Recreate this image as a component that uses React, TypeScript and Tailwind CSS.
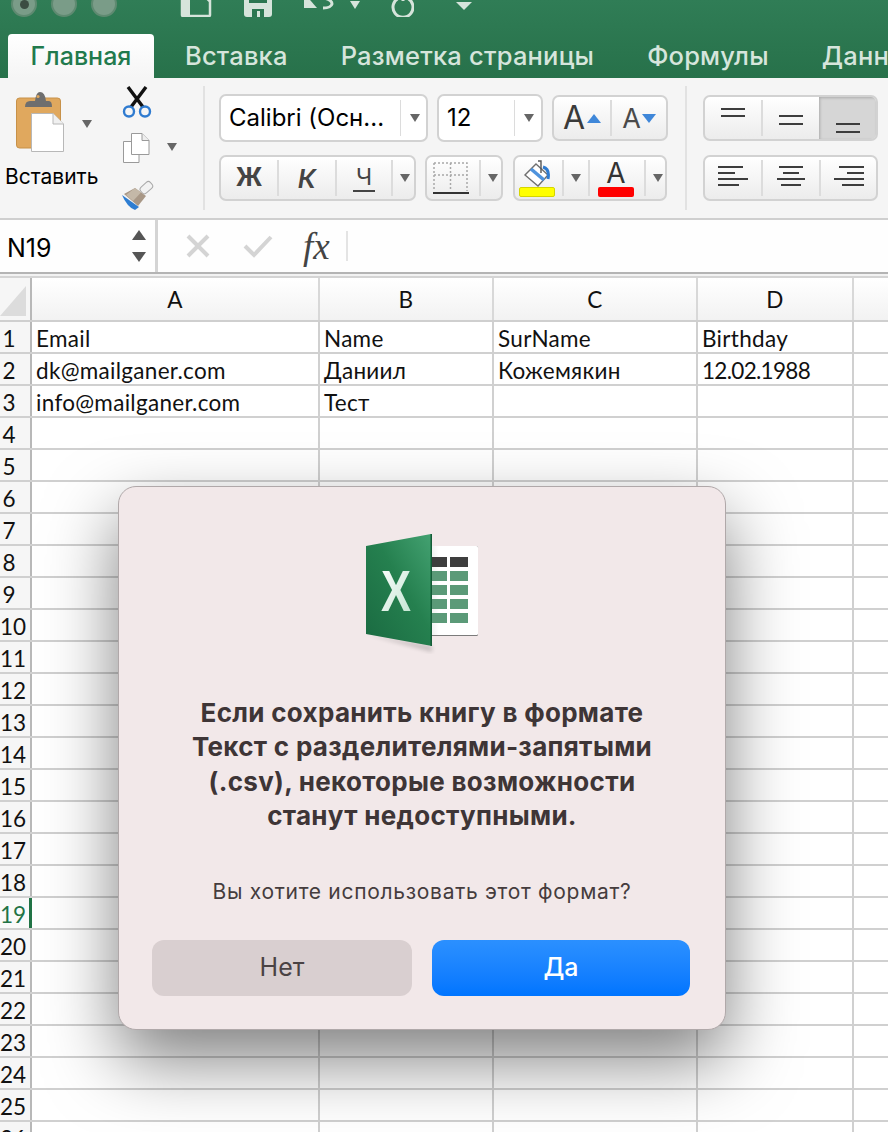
import React from 'react';

const columns = [
  { name: 'A', width: 'w-[288px]' },
  { name: 'B', width: 'w-[174px]' },
  { name: 'C', width: 'w-[204px]' },
  { name: 'D', width: 'w-[156px]' },
  { name: '', width: 'w-[40px]' },
];

const cellData: Record<number, string[]> = {
  1: ['Email', 'Name', 'SurName', 'Birthday', ''],
  2: ['dk@mailganer.com', 'Даниил', 'Кожемякин', '12.02.1988', ''],
  3: ['info@mailganer.com', 'Тест', '', '', ''],
};

const rows = Array.from({ length: 26 }, (_, i) => i + 1);
const emptyRow = ['', '', '', '', ''];

const Caret: React.FC<{ up?: boolean; color?: string; className?: string }> = ({ up, color = '#666666', className }) => (
  <svg width="10" height="8" viewBox="0 0 10 8" preserveAspectRatio="none" className={className}>
    <path d={up ? 'M0 8 L5 0 L10 8 Z' : 'M0 0 L10 0 L5 8 Z'} fill={color} />
  </svg>
);

const Lines: React.FC<{ rows: [number, number, number][] }> = ({ rows }) => (
  <svg width="32" height="30" viewBox="0 0 32 30">
    {rows.map(([y, x1, x2], i) => (
      <rect key={i} x={x1} y={y} width={x2 - x1} height="2" fill="#3d3d3d" />
    ))}
  </svg>
);

const Divider = () => <div className="h-[36px] w-[2px] bg-[#dcdcdc]" />;

const groupClass =
  'flex h-[46px] items-center overflow-hidden rounded-[7px] border-2 border-[#d2d2d2] bg-linear-to-b from-white to-[#ececec]';

const ClipboardIcon = () => (
  <svg width="48" height="60" viewBox="0 0 48 60">
    <rect x="0.5" y="6" width="44" height="50" rx="3" fill="#e0a85e" stroke="#c79149" />
    <path d="M9 15 Q9 9 14 9 L19 9 Q20 0 24 0 Q29 0 30 9 L33 9 Q36 9 36 15 Z" fill="#6e6e6e" />
    <circle cx="22" cy="4.5" r="1.6" fill="#e0a85e" />
    <path d="M15.5 21.5 L37 21.5 L47.5 32 L47.5 59.5 L15.5 59.5 Z" fill="#ffffff" stroke="#b8b8b8" />
    <path d="M37 21.5 L37 32 L47.5 32" fill="#f0f0f0" stroke="#b8b8b8" />
  </svg>
);

const ScissorsIcon = () => (
  <svg width="30" height="33" viewBox="0 0 30 33">
    <path d="M6 1 L21 21 M24 1 L9 21" stroke="#111111" strokeWidth="3.4" />
    <circle cx="7" cy="25.5" r="5" fill="none" stroke="#2f7bd0" strokeWidth="2.4" />
    <circle cx="23" cy="25.5" r="5" fill="none" stroke="#2f7bd0" strokeWidth="2.4" />
  </svg>
);

const CopyIcon = () => (
  <svg width="27" height="31" viewBox="0 0 27 31">
    <path d="M0.5 8.5 L16 8.5 L16 29.5 L0.5 29.5 Z" fill="#ffffff" stroke="#9a9a9a" />
    <path d="M8.5 0.5 L19 0.5 L26 7.5 L26 21.5 L8.5 21.5 Z" fill="#ffffff" stroke="#9a9a9a" />
    <path d="M19 0.5 L19 7.5 L26 7.5" fill="#eeeeee" stroke="#9a9a9a" />
  </svg>
);

const BrushIcon = () => (
  <svg width="34" height="30" viewBox="0 0 34 30">
    <rect x="21" y="1" width="8" height="13" rx="3" transform="rotate(48 25 8)" fill="#f2f2f2" stroke="#a9a9a9" />
    <path d="M14 8 L25 16 L17 26 L3 14 Z" fill="#a89786" />
    <path d="M14 8 L20 12.5 L12 21 L5 15 Z" fill="#c4b8a8" />
    <path d="M1 15 L18 27 L14 30 Q6 27 1 15 Z" fill="#2d7dd2" />
  </svg>
);

const BucketIcon = () => (
  <svg width="28" height="28" viewBox="0 0 28 28">
    <path d="M13 4 L25 15 L15 26 L2 15 Z" fill="#ffffff" stroke="#6f6f6f" strokeWidth="1.4" />
    <path d="M8 9 L21 20" stroke="#4f93dd" strokeWidth="3.5" />
    <path d="M15 1 L18 1 L18 13" fill="none" stroke="#555555" strokeWidth="1.4" />
    <path d="M20 7 Q27 9 25 19" fill="none" stroke="#2f7bd0" strokeWidth="3" />
  </svg>
);

const ExcelLogo = () => (
  <svg width="116" height="120" viewBox="0 0 116 120">
    <defs>
      <linearGradient id="xlGreen" x1="0" y1="1" x2="1" y2="0">
        <stop offset="0" stopColor="#1a6a41" />
        <stop offset="0.55" stopColor="#25804f" />
        <stop offset="1" stopColor="#44a272" />
      </linearGradient>
      <linearGradient id="xlLetter" x1="0" y1="0" x2="1" y2="1">
        <stop offset="0" stopColor="#ffffff" />
        <stop offset="1" stopColor="#bfe3cf" />
      </linearGradient>
      <linearGradient id="xlSheet" x1="0" y1="0" x2="1" y2="0">
        <stop offset="0" stopColor="#e6e6e6" />
        <stop offset="0.25" stopColor="#ffffff" />
        <stop offset="1" stopColor="#ffffff" />
      </linearGradient>
      <filter id="xlBlur">
        <feGaussianBlur stdDeviation="2" />
      </filter>
    </defs>
    <path d="M0 100 L66 112 L66 118 Z" fill="#000000" opacity="0.18" filter="url(#xlBlur)" />
    <rect x="60" y="12" width="52" height="90" rx="1.5" fill="#7b7b7b" />
    <rect x="60" y="12" width="52" height="89" rx="1.5" fill="url(#xlSheet)" />
    {[65, 84].map((x, i) => (
      <rect key={x} x={x} y="23" width={i === 0 ? 16 : 18} height="10" fill="#3e3e3e" />
    ))}
    {[37, 51, 65, 79].map((y) =>
      [65, 84].map((x, i) => <rect key={`${x}-${y}`} x={x} y={y} width={i === 0 ? 16 : 18} height="10" fill="#5b9a78" />),
    )}
    <path d="M0 12 L65 0 L66 112 L0 100 Z" fill="url(#xlGreen)" />
    <path d="M64.5 0 L66 0 L66 112 L64.5 112 Z" fill="#135c37" />
    <text
      x="15"
      y="77"
      fontFamily="'Liberation Sans', Arial, sans-serif"
      fontWeight="700"
      fontSize="57"
      textLength="30"
      lengthAdjust="spacingAndGlyphs"
      fill="url(#xlLetter)"
    >
      X
    </text>
  </svg>
);

const TopBar = () => (
  <div className="flex h-[34px] items-end pb-[17px] pl-[11px]">
    <div className="flex gap-[14px]">
      <div className="flex h-[26px] w-[26px] items-center justify-center rounded-full border-2 border-[#5f8a71] bg-[#7a9c88]">
        <div className="h-[9px] w-[9px] rounded-full bg-[#3b4d42]" />
      </div>
      <div className="h-[26px] w-[26px] rounded-full border-2 border-[#5f8a71] bg-[#7a9c88]" />
      <div className="h-[26px] w-[26px] rounded-full border-2 border-[#5f8a71] bg-[#7a9c88]" />
    </div>
    <svg width="32" height="24" viewBox="0 0 32 24" className="ml-[63px]">
      <path d="M2 1 H30 V22 Q30 23 29 23 H3 Q2 23 2 22 Z" fill="none" stroke="#d6e4db" strokeWidth="2.5" />
      <path d="M10 0 V23 H2 V0 Z" fill="#d6e4db" />
      <path d="M20 1 H30 V10 Z" fill="#d6e4db" />
    </svg>
    <svg width="28" height="24" viewBox="0 0 28 24" className="ml-[32px]">
      <path d="M0 0 H28 V21 Q28 24 25 24 H3 Q0 24 0 21 Z" fill="#d6e4db" />
      <rect x="8" y="16" width="12" height="8" fill="#2b7650" />
      <rect x="13" y="18" width="3" height="6" fill="#d6e4db" />
      <rect x="5" y="4" width="18" height="6" fill="#2b7650" />
    </svg>
    <svg width="30" height="24" viewBox="0 0 30 24" className="ml-[32px]">
      <path d="M0 0 V15 H13 L0 0 Z" fill="#d6e4db" />
      <path d="M10 5 H20 Q28 7 28 11 Q27 15 19 15" fill="none" stroke="#d6e4db" strokeWidth="3" />
    </svg>
    <Caret color="#d6e4db" className="mb-[8px] ml-[16px]" />
    <svg width="24" height="24" viewBox="0 0 24 24" className="ml-[30px]">
      <path d="M9 5 A10 10 0 1 0 17 5" fill="none" stroke="#d6e4db" strokeWidth="3" />
      <path d="M13 0 V8" stroke="#d6e4db" strokeWidth="3" />
    </svg>
    <svg width="16" height="8" viewBox="0 0 16 8" className="mb-[7px] ml-[42px]">
      <path d="M0 0 H16 L8 8 Z" fill="#d6e4db" />
    </svg>
  </div>
);

const Tabs = () => (
  <div className="flex h-[44px] items-center pl-[8px] text-[25.5px] leading-none font-medium tracking-[0.2px] whitespace-nowrap text-[#d6e5dc]">
    <div className="flex h-[44px] w-[146px] shrink-0 items-center justify-center rounded-t-[4px] bg-linear-to-b from-white to-[#f5f5f5] text-[25px] tracking-normal text-[#217a4d]">
      Главная
    </div>
    <span className="ml-[31px]">Вставка</span>
    <span className="ml-[53px]">Разметка страницы</span>
    <span className="ml-[53px]">Формулы</span>
    <span className="ml-[53px]">Данные</span>
  </div>
);

const Ribbon = () => (
  <div className="flex h-[140px] bg-[#f5f5f5] text-black">
    {/* буфер обмена */}
    <div className="flex w-[203px] shrink-0 pt-[14px] pl-[5px]">
      <div className="flex w-[94px] flex-col">
        <div className="flex items-start pl-[11px]">
          <ClipboardIcon />
          <Caret className="mt-[28px] ml-[18px]" />
        </div>
        <span className="mt-[13px] text-[21px] leading-[24px] whitespace-nowrap">Вставить</span>
      </div>
      <div className="ml-[22px] flex flex-col">
        <div className="ml-[1px] h-[47px] -translate-y-[6px]">
          <ScissorsIcon />
        </div>
        <div className="-mt-[6px] ml-[2px] flex items-start">
          <CopyIcon />
          <Caret className="mt-[10px] ml-[17px]" />
        </div>
        <div className="mt-[16px]">
          <BrushIcon />
        </div>
      </div>
    </div>
    <div className="mt-[8px] h-[124px] w-[2px] bg-[#e2e2e2]" />

    {/* шрифт */}
    <div className="ml-[14px] flex w-[466px] shrink-0 flex-col pt-[16px]">
      <div className="flex">
        <div className="flex h-[48px] w-[209px] items-center rounded-[7px] border-2 border-[#d2d2d2] bg-white pl-[8px] text-[24px]">
          <span className="w-[171px] whitespace-nowrap">Calibri (Осн...</span>
          <div className="h-[36px] w-[1px] bg-[#dcdcdc]" />
          <Caret className="ml-[9px]" />
        </div>
        <div className="ml-[9px] flex h-[48px] w-[106px] items-center rounded-[7px] border-2 border-[#d2d2d2] bg-white pl-[8px] text-[24px]">
          <span className="w-[67px]">12</span>
          <div className="h-[36px] w-[1px] bg-[#dcdcdc]" />
          <Caret className="ml-[9px]" />
        </div>
        <div className={`${groupClass} mt-[1px] ml-[9px] w-[116px]`}>
          <div className="flex w-[57px] items-center justify-center gap-[2px] text-[32px] leading-none text-[#3a3a3a]">
            A
            <Caret up color="#3f87d9" className="h-[9px] w-[14px]" />
          </div>
          <Divider />
          <div className="flex w-[55px] items-center justify-center gap-[1px] text-[27px] leading-none text-[#4a4a4a]">
            A
            <Caret color="#3f87d9" className="h-[9px] w-[14px]" />
          </div>
        </div>
      </div>
      <div className="mt-[13px] flex">
        <div className={`${groupClass} w-[197px] text-[#444444]`}>
          <span className="w-[56px] text-center text-[25px] font-bold">Ж</span>
          <Divider />
          <span className="w-[56px] text-center text-[26px] font-semibold italic">К</span>
          <Divider />
          <div className="flex w-[54px] justify-center">
            <span className="border-b-2 border-[#444444] px-[3px] text-[23px] leading-[26px]">Ч</span>
          </div>
          <Divider />
          <Caret className="ml-[7px]" />
        </div>
        <div className={`${groupClass} ml-[9px] w-[78px]`}>
          <svg width="36" height="36" viewBox="0 0 36 36" className="ml-[6px]">
            <path d="M1 3 H34 V31 M1 3 V31 M1 15 H34 M17.5 3 V31" fill="none" stroke="#a8a8a8" strokeWidth="1.5" strokeDasharray="2 2" />
            <rect x="0" y="32" width="36" height="2" fill="#333333" />
          </svg>
          <div className="ml-[10px]">
            <Divider />
          </div>
          <Caret className="ml-[7px]" />
        </div>
        <div className={`${groupClass} ml-[10px] w-[154px]`}>
          <div className="ml-[3px] flex w-[38px] flex-col items-center">
            <BucketIcon />
            <div className="-mt-[1px] h-[10px] w-[36px] rounded-[2px] border border-[#d5d500] bg-[#ffff00]" />
          </div>
          <div className="ml-[6px]">
            <Divider />
          </div>
          <Caret className="ml-[7px]" />
          <div className="ml-[7px]">
            <Divider />
          </div>
          <div className="ml-[8px] flex w-[36px] flex-col items-center">
            <span className="h-[26px] text-[28px] leading-[26px] text-[#333333]">A</span>
            <div className="mt-[1px] h-[10px] w-[36px] rounded-[2px] bg-[#ff0000]" />
          </div>
          <div className="ml-[10px]">
            <Divider />
          </div>
          <Caret className="ml-[7px]" />
        </div>
      </div>
    </div>
    <div className="mt-[8px] h-[124px] w-[2px] bg-[#e2e2e2]" />

    {/* выравнивание */}
    <div className="ml-[16px] flex flex-col gap-[14px] pt-[17px]">
      <div className={`${groupClass} w-[175px]`}>
        <div className="flex w-[56px] justify-center">
          <Lines rows={[[5, 4, 28], [12, 4, 28]]} />
        </div>
        <Divider />
        <div className="flex w-[56px] justify-center">
          <Lines rows={[[12, 4, 28], [20, 4, 28]]} />
        </div>
        <div className="flex h-full flex-1 items-center justify-center bg-[#d6d6d6] pt-[3px] shadow-[inset_1px_1px_3px_rgba(0,0,0,0.2)]">
          <Lines rows={[[18, 4, 28], [26, 4, 28]]} />
        </div>
      </div>
      <div className={`${groupClass} w-[175px]`}>
        <div className="flex w-[56px] justify-center">
          <Lines rows={[[3, 1, 26], [9, 1, 18], [15, 1, 31], [21, 1, 22]]} />
        </div>
        <Divider />
        <div className="flex w-[56px] justify-center">
          <Lines rows={[[3, 4, 28], [9, 8, 24], [15, 2, 30], [21, 6, 26]]} />
        </div>
        <Divider />
        <div className="flex flex-1 justify-center">
          <Lines rows={[[3, 6, 31], [9, 14, 31], [15, 1, 31], [21, 9, 31]]} />
        </div>
      </div>
    </div>
  </div>
);

const FormulaBar = () => (
  <>
    <div className="h-[2px] bg-[#cfcfcf]" />
    <div className="flex h-[52px] bg-[#fefefe]">
      <div className="flex w-[155px] items-center pl-[7px] text-[25px] text-black">
        <span className="flex-1 pt-[6px]">N19</span>
        <div className="mr-[9px] flex flex-col gap-[12px]">
          <Caret up color="#555555" className="h-[10px] w-[14px]" />
          <Caret color="#555555" className="h-[10px] w-[14px]" />
        </div>
      </div>
      <div className="w-[3px] bg-[#d4d4d4]" />
      <div className="ml-[28px] flex items-center">
        <svg width="24" height="24" viewBox="0 0 24 24">
          <path d="M2 2 L22 22 M22 2 L2 22" stroke="#d4d4d4" strokeWidth="4" />
        </svg>
        <svg width="30" height="24" viewBox="0 0 30 24" className="ml-[33px]">
          <path d="M2 12 L11 21 L28 3" fill="none" stroke="#d4d4d4" strokeWidth="4" />
        </svg>
        <span className="ml-[30px] font-['Liberation_Serif',serif] text-[37px] leading-none font-medium text-[#444444] italic">fx</span>
        <div className="ml-[16px] h-[30px] w-[2px] bg-[#e4e4e4]" />
      </div>
    </div>
    <div className="h-[2px] bg-[#b4b4b4]" />
    <div className="h-[2px] bg-[#f2f2f2]" />
    <div className="h-[2px] bg-[#d4d4d4]" />
  </>
);

const Sheet = () => (
  <div className="font-['Lato',sans-serif] text-[22.5px] tracking-[0.3px] text-[#111111]">
    <div className="flex h-[44px] border-b-2 border-[#cfcfcf]">
      <div className="flex w-[32px] shrink-0 items-end border-r-2 border-[#b8b8b8] bg-[#f6f6f6] pb-[4px]">
        <svg width="26" height="30" viewBox="0 0 26 30">
          <path d="M26 0 V30 H0 Z" fill="#dcdcdc" />
        </svg>
      </div>
      {columns.map((col) => (
        <div
          key={col.name}
          className={`flex ${col.width} shrink-0 items-center justify-center border-r-2 border-[#d8d8d8] bg-linear-to-b from-white to-[#f2f2f2] pt-[2px]`}
        >
          {col.name}
        </div>
      ))}
    </div>
    {rows.map((row) => {
      const cells = cellData[row] ?? emptyRow;
      const selected = row === 19;
      return (
        <div key={row} className="flex h-[32px] border-b-2 border-[#d0d0d0]">
          <div
            className={
              selected
                ? 'w-[32px] shrink-0 border-r-[3px] border-[#217346] bg-[#fafafa] text-[#217346]'
                : 'w-[32px] shrink-0 border-r-2 border-[#b8b8b8] bg-[#f6f6f6]'
            }
          >
            <div className="w-[18px] text-center leading-[33px] tracking-normal whitespace-nowrap">{row}</div>
          </div>
          {columns.map((col, i) => (
            <div
              key={col.name}
              className={`${col.width} shrink-0 overflow-hidden border-r-2 border-[#d0d0d0] bg-white pl-[4px] leading-[33px] whitespace-nowrap`}
            >
              {i === 3 && row === 2 ? <span className="tracking-[-0.7px]">{cells[i]}</span> : cells[i]}
            </div>
          ))}
        </div>
      );
    })}
  </div>
);

const SaveDialog = () => (
  <div className="absolute top-[486px] left-[118px] flex h-[544px] w-[608px] flex-col items-center rounded-[18px] border border-[#b0a8a9] bg-[#f2e8e9] pt-[47px] shadow-[0_30px_70px_rgba(0,0,0,0.5)]">
    <div className="ml-[3px] h-[114px]">
      <ExcelLogo />
    </div>
    <h2 className="mt-[48px] w-[560px] text-center text-[26px] leading-[34.4px] font-bold tracking-[0.3px] text-[#3e3536]">
      Если сохранить книгу в формате
      <br />
      Текст с разделителями-запятыми
      <br />
      (.csv), некоторые возможности
      <br />
      станут недоступными.
    </h2>
    <p className="mt-[44px] text-center text-[21px] leading-[28px] tracking-[0.7px] whitespace-nowrap text-[#453c3d]">
      Вы хотите использовать этот формат?
    </p>
    <div className="mt-[34px] flex w-full gap-[20px] px-[33px]">
      <button className="h-[56px] w-[260px] rounded-[12px] bg-[#d9cfd0] text-[25px] text-[#4a4344]">Нет</button>
      <button className="h-[56px] w-[258px] rounded-[12px] bg-linear-to-b from-[#2b90ff] to-[#0075ff] text-[25px] font-medium text-white">
        Да
      </button>
    </div>
  </div>
);

const App: React.FC = () => {
  return (
    <div className="relative h-[1132px] w-[888px] overflow-hidden bg-white font-['Inter',sans-serif]">
      <div className="h-[78px] bg-linear-to-b from-[#307d56] to-[#27714a]">
        <TopBar />
        <Tabs />
      </div>
      <Ribbon />
      <FormulaBar />
      <Sheet />
      <SaveDialog />
    </div>
  );
};

export default App;
